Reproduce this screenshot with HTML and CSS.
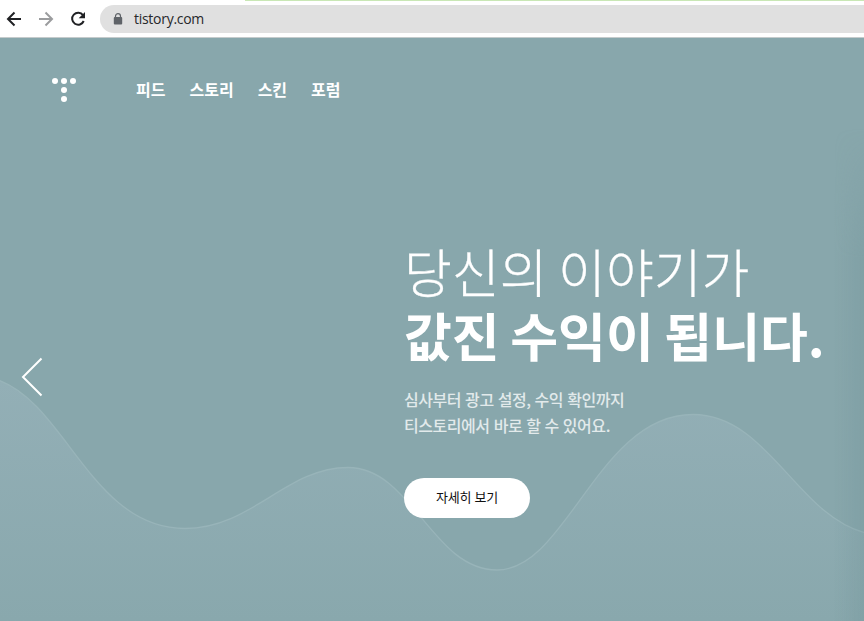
FILE: index.html
```html
<!DOCTYPE html>
<html lang="ko">
<head>
  <meta charset="UTF-8" />
  <title>TISTORY</title>
  <link rel="stylesheet" href="styles.css">
</head>
<body>

  <!-- Browser toolbar -->
  <div class="toolbar">
    <div class="tab-line"></div>
    <svg class="nav-icons" width="100" height="37" viewBox="0 0 100 37" fill="none" stroke-width="2">
      <path d="M21 19H8.5M14.5 12.5L8 19l6.5 6.5" stroke="#202124" />
      <path d="M39 19h12.5M45.500 12.500L52 19l-6.500 6.500" stroke="#9b9c9e" />
      <path d="M83 15.200A6 6 0 1 0 83.700 21" stroke="#202124" />
      <path d="M85 12v6.300h-6.300z" fill="#202124" />
    </svg>
    <div class="address">
      <svg class="lock" width="10" height="12" viewBox="0 0 10 12">
        <path d="M2.500 5V3.200a2.500 2.500 0 0 1 5 0V5" fill="none" stroke="#5f6368" stroke-width="1.200" />
        <rect x="0.800" y="4" width="8.400" height="7.600" rx="1" fill="#5f6368" />
      </svg>
      <span>tistory.com</span>
    </div>
  </div>

  <!-- Main slide -->
  <div class="hero">
    <svg class="wave" width="864" height="583" viewBox="0 0 864 583">
      <defs>
        <linearGradient id="wave-fill" gradientUnits="userSpaceOnUse" x1="0" y1="342" x2="0" y2="583">
          <stop offset="0" stop-color="#93afb6" />
          <stop offset="1" stop-color="#89a8ad" />
        </linearGradient>
      </defs>
      <path d="M-2 342C66 366 92 490.500 185 490.500C252 490.500 286 429.500 348 429.500C412 429.500 432 532 497 532C567 532 598 376.500 693 376.500C768 376.500 797 478 866 495V590H-2Z" fill="url(#wave-fill)" stroke="#98b4b9" stroke-width="1.300" />
    </svg>
    <div class="edge-shade"></div>

    <header class="header">
      <svg class="logo" width="24" height="24" viewBox="0 0 24 24" fill="#fff">
        <circle cx="3" cy="3" r="3" />
        <circle cx="12" cy="3" r="3" />
        <circle cx="21" cy="3" r="3" />
        <circle cx="12" cy="12" r="3" />
        <circle cx="12" cy="21" r="3" />
      </svg>
      <nav class="menu">
        <a>피드</a>
        <a>스토리</a>
        <a>스킨</a>
        <a>포럼</a>
      </nav>
    </header>

    <div class="content">
      <h1><span>당신의 이야기가</span><strong>값진 수익이 됩니다.</strong></h1>
      <p>심사부터 광고 설정, 수익 확인까지<br>티스토리에서 바로 할 수 있어요.</p>
      <button>자세히 보기</button>
    </div>

    <svg class="prev" width="22" height="40" viewBox="0 0 22 40">
      <path d="M20.500 1.500L2 20l18.500 18.500" fill="none" stroke="#fff" stroke-width="2" />
    </svg>
  </div>

</body>
</html>
```
FILE: styles.css
```css
* {
  box-sizing: border-box;
}

body {
  margin: 0;
  height: 621px;
  overflow: hidden;
  font-family: 'Noto Sans CJK KR', sans-serif;
}

/* Toolbar */
.toolbar {
  position: relative;
  display: flex;
  height: 38px;
  background-color: #fff;
  border-bottom: 1px solid #c5cbcc;
}

.tab-line {
  position: absolute;
  top: 0;
  left: 245px;
  right: 0;
  height: 1px;
  background-color: #c9e7b5;
}

.nav-icons {
  flex: none;
}

.address {
  display: flex;
  align-items: center;
  flex: 1;
  height: 28px;
  margin-top: 5px;
  padding-left: 13px;
  gap: 11px;
  background-color: #e0e0e0;
  border-radius: 14px 0 0 14px;
  color: #27282b;
  font-family: 'Open Sans', sans-serif;
  font-size: 14px;
  letter-spacing: -0.28px;
}

.address span {
  padding-bottom: 1px;
}

/* Slide */
.hero {
  position: relative;
  height: 583px;
  background-color: #88a7ac;
  color: #fff;
}

.wave {
  position: absolute;
  top: 0;
  left: 0;
}

.edge-shade {
  position: absolute;
  top: 0;
  right: 0;
  bottom: 0;
  width: 30px;
  background: linear-gradient(to right, rgba(110, 145, 150, 0), rgba(110, 145, 150, 0.28));
  -webkit-mask-image: linear-gradient(transparent 90px, #000 220px);
  mask-image: linear-gradient(transparent 90px, #000 220px);
}

.header {
  position: relative;
  display: flex;
  align-items: center;
  height: 104px;
  padding-left: 52px;
}

.menu {
  display: flex;
  gap: 24px;
  margin-left: 60px;
  padding-bottom: 2px;
  font-size: 16px;
  font-weight: 700;
}

.content {
  position: relative;
  padding: 97px 0 0 404px;
}

h1 {
  margin: 0;
  font-size: 52px;
  font-weight: 300;
  line-height: 64px;
  word-spacing: -4px;
  white-space: nowrap;
}

h1 span,
h1 strong {
  display: block;
}

h1 span {
  -webkit-text-stroke: 0.3px #fff;
}

h1 strong {
  font-weight: 700;
}

p {
  margin: 19px 0 0;
  font-size: 16px;
  font-weight: 500;
  line-height: 26px;
  letter-spacing: -0.45px;
  color: #e2eaeb;
}

button {
  display: block;
  width: 126px;
  height: 40px;
  margin-top: 40px;
  padding: 0 0 3px;
  border: none;
  border-radius: 20px;
  background-color: #fff;
  color: #111;
  font-family: inherit;
  font-size: 13px;
  letter-spacing: -0.2px;
}

.prev {
  position: absolute;
  top: 319px;
  left: 21px;
}
```
